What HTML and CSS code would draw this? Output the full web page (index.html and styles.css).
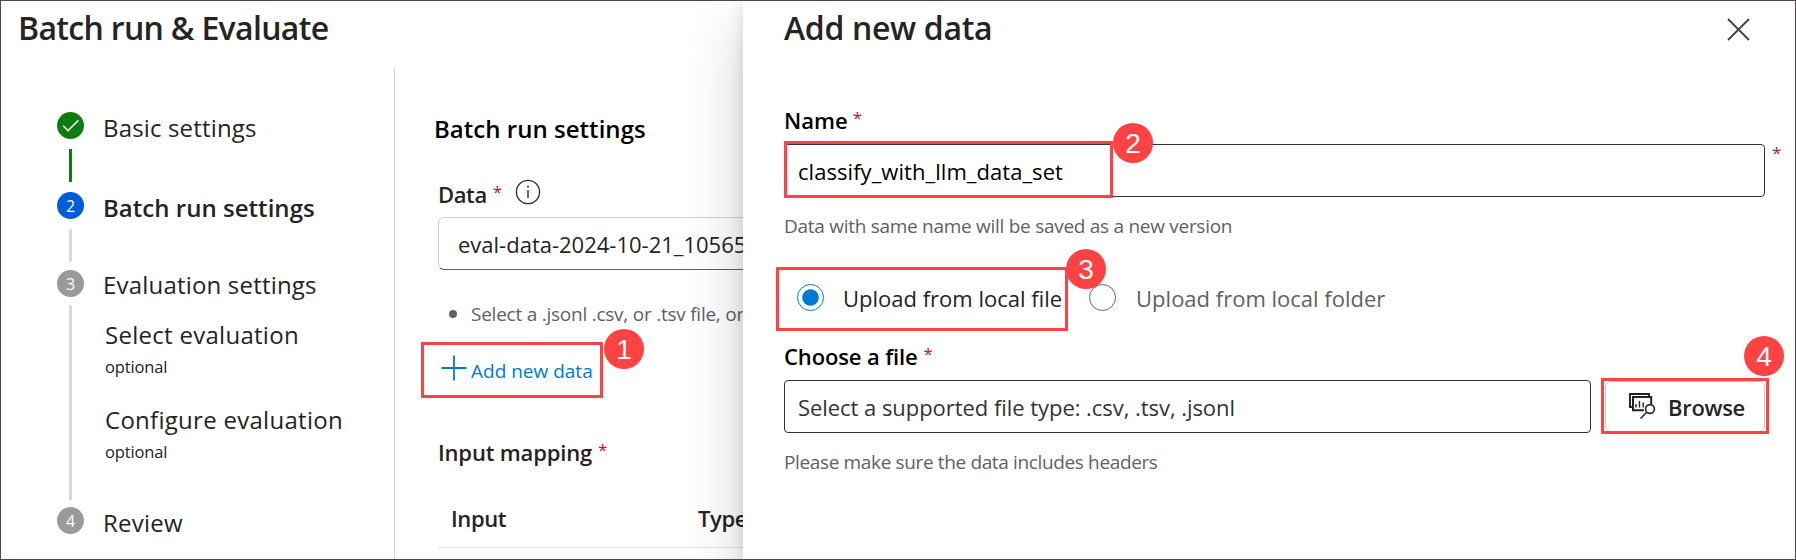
FILE: index.html
```html
<!DOCTYPE html>
<html lang="en">
<head>
<meta charset="utf-8">
<title>Batch run &amp; Evaluate</title>
<link rel="stylesheet" href="styles.css">
</head>
<body>
<div class="window">
  <header class="page-header"><h1 class="title page-title">Batch run &amp; Evaluate</h1></header>
  <div class="page-body">
    <nav class="stepper">
      <div class="step step-basic">
        <div class="rail">
          <span class="dot done"><svg width="18" height="14" viewBox="0 0 18 14"><path d="M1.2 6.8 L6 11.8 L16.4 1.4" fill="none" stroke="#fff" stroke-width="1.5"/></svg></span>
          <span class="line green"></span>
        </div>
        <div class="step-label ls-basic">Basic settings</div>
      </div>
      <div class="step step-batch">
        <div class="rail"><span class="dot current">2</span><span class="line"></span></div>
        <div class="step-label active">Batch run settings</div>
      </div>
      <div class="step step-eval">
        <div class="rail"><span class="dot">3</span><span class="line long"></span></div>
        <div class="step-content">
          <div class="step-label ls-eval">Evaluation settings</div>
          <div class="substep first"><div class="sub-label">Select evaluation</div><div class="optional">optional</div></div>
          <div class="substep"><div class="sub-label">Configure evaluation</div><div class="optional">optional</div></div>
        </div>
      </div>
      <div class="step">
        <div class="rail"><span class="dot">4</span></div>
        <div class="step-label ls-review">Review</div>
      </div>
    </nav>
    <main class="main">
      <h2 class="section-title">Batch run settings</h2>
      <div class="form">
        <div class="label data-label"><span class="ls-data">Data</span><span class="req">*</span>
          <svg class="info" width="26" height="26" viewBox="0 0 26 26"><circle cx="13" cy="13" r="11.6" fill="none" stroke="#333" stroke-width="1.4"/><path d="M13 11v8" stroke="#333" stroke-width="1.5"/><circle cx="13" cy="7.6" r="1" fill="#333"/></svg>
        </div>
        <div class="select">eval-data-2024-10-21_105652</div>
        <ul class="hints"><li>Select a .jsonl .csv, or .tsv file, or folder</li></ul>
        <a class="add-link">
          <svg width="26" height="26" viewBox="0 0 26 26"><path d="M13 .5v25M.5 13h25" stroke="#0078d4" stroke-width="1.8"/></svg>
          <span>Add new data</span>
        </a>
        <div class="label mapping-label"><span class="ls-mapping">Input mapping</span><span class="req">*</span></div>
        <div class="table-head"><span class="col-input">Input</span><span>Type</span></div>
      </div>
    </main>
  </div>

  <aside class="drawer">
    <header class="drawer-header">
      <h1 class="title drawer-title">Add new data</h1>
      <svg class="close" width="23" height="23" viewBox="0 0 23 23"><path d="M1 1L22 22M22 1L1 22" stroke="#424242" stroke-width="1.8"/></svg>
    </header>
    <div class="label name-label"><span>Name</span><span class="req">*</span></div>
    <div class="name-row"><div class="field name-field">classify_with_llm_data_set</div><span class="req-dark">*</span></div>
    <p class="help help-name">Data with same name will be saved as a new version</p>
    <div class="radios">
      <span class="radio checked"></span><span class="radio-label">Upload from local file</span>
      <span class="radio second"></span><span class="radio-label muted">Upload from local folder</span>
    </div>
    <div class="label file-label"><span class="ls-choose">Choose a file</span><span class="req">*</span></div>
    <div class="file-row">
      <div class="field file-field">Select a supported file type: .csv, .tsv, .jsonl</div>
      <button class="browse">
        <svg width="27" height="27" viewBox="0 0 27 27" fill="none" stroke="#242424"><path d="M3.2 14H1V1H20V3.6" stroke-width="2"/><path d="M15 17.2H4V4H22.2V11" stroke-width="2"/><path d="M7 14.5v-3.5M10.5 14.5v-6.5M14.2 14.5v-5" stroke-width="1.4"/><circle cx="21" cy="16" r="4.4" stroke-width="1.6"/><path d="M17.7 19.2L11.6 25.6" stroke-width="1.5"/></svg>
        <span>Browse</span>
      </button>
    </div>
    <p class="help help-file">Please make sure the data includes headers</p>
  </aside>

  <div class="frame frame-1"></div><div class="badge badge-1">1</div>
  <div class="frame frame-2"></div><div class="badge badge-2">2</div>
  <div class="frame frame-3"></div><div class="badge badge-3">3</div>
  <div class="frame frame-4"></div><div class="badge badge-4">4</div>
</div>
</body>
</html>
```
FILE: styles.css
```css
* { box-sizing: border-box; }
body { margin: 0; background: #fff; color: #242424; font-family: "Open Sans", "Noto Sans", sans-serif; font-size: 22px; line-height: 30px; }
h1, h2, p, ul { margin: 0; padding: 0; font-weight: 400; }
svg { display: block; flex: none; }

.window { position: relative; width: 1796px; height: 560px; border: 1px solid #4f494b; overflow: hidden; white-space: nowrap; }
.title { font-size: 32px; line-height: 44px; font-weight: 600; }
.page-header { height: 67px; padding: 5px 0 0 17px; }
.page-title { letter-spacing: -0.68px; }
.page-body { display: flex; height: 491px; }

/* Wizard steps */
.stepper { width: 394px; flex: none; padding: 44px 0 0 56px; border-right: 1px solid #d1d1d1; }
.step { display: flex; gap: 19px; }
.step-basic { height: 80px; }
.step-batch { height: 77.5px; }
.step-eval { height: 237.5px; }
.rail { width: 27px; display: flex; flex-direction: column; align-items: center; gap: 10px; }
.step-eval .rail { gap: 8px; }
.dot { width: 27px; height: 27px; border-radius: 50%; background: #9a9a9a; color: #fff; display: flex; align-items: center; justify-content: center; font-size: 16px; line-height: 20px; padding-top: 1px; }
.dot.done { background: #107c10; }
.dot.current { background: #015cda; }
.line { width: 3px; height: 33px; background: #d9d9d9; }
.line.green { background: #107c10; }
.line.long { height: 195px; }
.step-label { font-size: 24px; line-height: 32px; margin-top: -0.5px; }
.step-label.active { font-weight: 600; letter-spacing: 0.03px; }
.ls-basic { letter-spacing: 0.16px; }
.ls-eval { letter-spacing: 0.19px; }
.ls-review { letter-spacing: 0.24px; }
.substep { padding: 24.5px 0 0 2px; }
.substep.first { padding-top: 17.7px; }
.sub-label { font-size: 24px; line-height: 32px; letter-spacing: 0.28px; }
.optional { margin-top: 4.5px; font-size: 16.5px; line-height: 24px; letter-spacing: -0.15px; }

/* Settings form */
.main { flex: 1; min-width: 0; padding: 44.7px 0 0 39px; overflow: hidden; }
.section-title { font-size: 24px; line-height: 32px; font-weight: 600; letter-spacing: 0.03px; color: #000; }
.form { padding-left: 4px; }
.label { display: flex; font-weight: 600; height: 30px; }
.req { margin-left: 6px; font-size: 17px; line-height: 25px; font-weight: 400; color: #c50f1f; }
.data-label { margin-top: 34.8px; }
.info { margin: -0.5px 0 0 13px; }
.ls-data { letter-spacing: -0.4px; }
.ls-mapping { letter-spacing: -0.17px; }
.ls-choose { letter-spacing: -0.13px; }
.select { margin-top: 7.5px; width: 700px; height: 53px; padding: 11px 0 0 19px; border: 1px solid #d1d1d1; border-bottom-color: #616161; border-radius: 6px; }
.hints { margin-top: 30.6px; list-style: none; font-size: 19px; line-height: 26px; letter-spacing: -0.24px; color: #616161; }
.hints li { display: flex; align-items: center; gap: 14px; padding-left: 11px; }
.hints li::before { content: ""; width: 8px; height: 8px; border-radius: 50%; background: #616161; }
.add-link { display: flex; gap: 4px; margin-top: 31px; padding-left: 3px; height: 26px; color: #0078d4; font-size: 19px; line-height: 26px; }
.add-link svg { margin-top: -3px; }
.mapping-label { margin-top: 53px; }
.table-head { display: flex; margin-top: 36px; padding: 0 0 14.5px 13px; width: 700px; border-bottom: 1px solid #e3e3e3; font-weight: 600; letter-spacing: -0.4px; }
.col-input { width: 247px; }

/* Side panel */
.drawer { position: absolute; top: 0; right: 0; bottom: 0; left: 742px; padding: 5px 0 0 41px; background: #fff; box-shadow: 0 25.6px 57.6px rgba(0, 0, 0, 0.19), 0 4.8px 14.4px rgba(0, 0, 0, 0.13); }
.drawer-header { display: flex; justify-content: space-between; height: 98.5px; padding-right: 45px; }
.drawer-title { letter-spacing: -0.33px; }
.close { margin-top: 12px; }
.name-label, .file-label { color: #000; }
.name-label .req { margin-left: 5px; }
.field { height: 53px; border: 1px solid #333; border-radius: 4px; padding: 11px 0 0 13px; }
.name-row { display: flex; gap: 7px; margin-top: 9.5px; }
.name-field { width: 981px; color: #000; letter-spacing: 0.05px; }
.req-dark { font-size: 17px; line-height: 17px; color: #a4262c; }
.help { font-size: 19px; line-height: 26px; color: #616161; }
.help-name { margin-top: 15.6px; letter-spacing: -0.28px; }
.radios { display: flex; align-items: center; height: 30px; margin-top: 44.4px; padding-left: 13px; }
.radio { width: 27px; height: 27px; border: 1px solid #616161; border-radius: 50%; margin-top: -1px; flex: none; }
.radio.checked { border-color: #0078d4; background: radial-gradient(circle, #0078d4 7.8px, transparent 8.6px); }
.radio.second { margin-left: 27px; }
.radio-label { padding-left: 19px; }
.muted { padding-left: 20px; color: #616161; }
.file-label { margin-top: 28.2px; }
.file-row { display: flex; gap: 14px; margin-top: 8.8px; }
.file-field { width: 807px; color: #333; letter-spacing: -0.05px; }
.browse { display: flex; gap: 12px; width: 160px; height: 51px; margin-top: 1px; padding: 10px 0 0 23px; border: 1px solid #c8c8c8; border-radius: 6px; background: #fff; color: #242424; font: 600 22px/30px "Open Sans", "Noto Sans", sans-serif; letter-spacing: -0.3px; }
.browse svg { margin-top: 1px; }
.help-file { margin-top: 15.6px; letter-spacing: -0.36px; }

/* Numbered callouts over the interface */
.frame { position: absolute; border: 3px solid #ff4343; }
.frame-1 { left: 420px; top: 341px; width: 182px; height: 56px; }
.frame-2 { left: 783px; top: 140px; width: 329px; height: 57px; }
.frame-3 { left: 775px; top: 266px; width: 292px; height: 64px; }
.frame-4 { left: 1600px; top: 377px; width: 168px; height: 56px; }
.badge { position: absolute; width: 40px; height: 40px; border-radius: 50%; background: #ff4343; color: #fff; font: 28px/41px "Liberation Sans", Arial, sans-serif; text-align: center; }
.badge-1 { left: 603px; top: 328px; }
.badge-2 { left: 1112px; top: 122px; }
.badge-3 { left: 1065px; top: 248px; }
.badge-4 { left: 1743px; top: 335px; }
```
